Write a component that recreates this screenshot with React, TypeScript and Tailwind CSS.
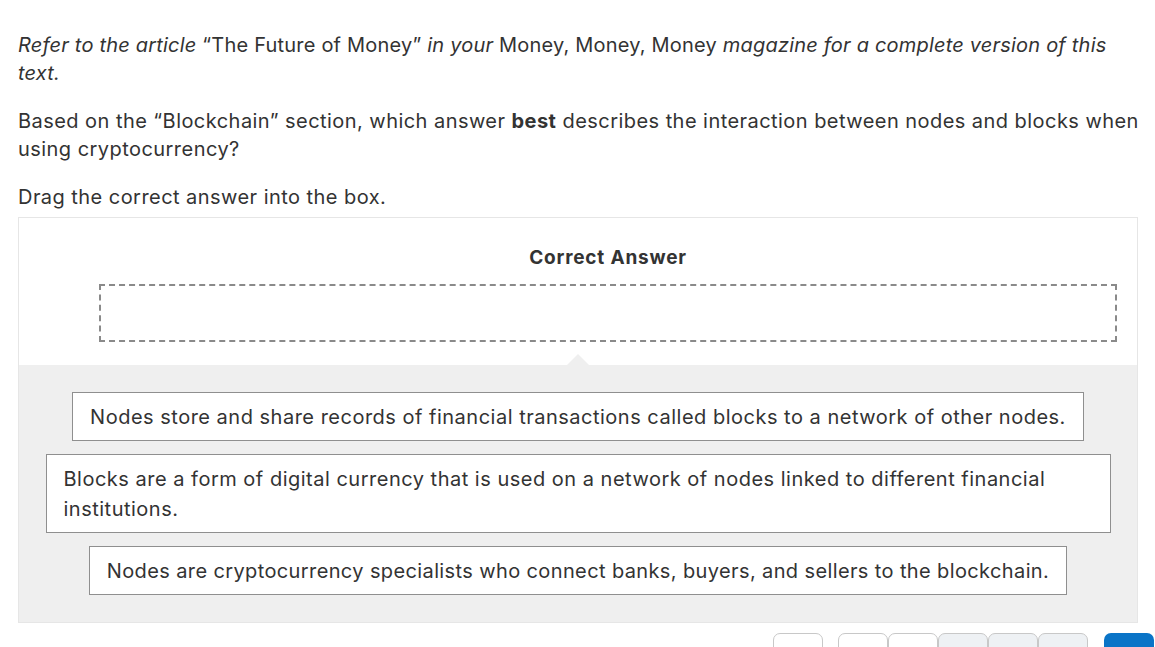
import React from "react";

const font = { fontFamily: "Inter, 'Noto Sans', sans-serif" };

function Card({ children, tight }: { children: React.ReactNode; tight?: boolean }) {
  return (
    <div
      className={
        "w-fit max-w-[1065px] mx-auto bg-white border border-[#8f8f8f] px-[17px] py-[8.5px] text-[20px] leading-[30px] text-[#333] " +
        (tight ? "tracking-[0.38px]" : "tracking-[0.5px]")
      }
    >
      {children}
    </div>
  );
}

function Tab({ className }: { className: string }) {
  return <div className={"shrink-0 w-[50px] h-[30px] rounded-t-[7px] " + className}></div>;
}

export default function App() {
  return (
    <div className="bg-white pl-[18px] pr-[8px] pt-[31px] text-[#333] text-[20px] leading-[28px] tracking-[0.45px] overflow-hidden h-[647px]" style={font}>
      <p className="tracking-[0.2px] w-[1110px]">
        <i>Refer to the article</i> “The Future of Money” <i>in your</i> Money, Money, Money{" "}
        <i>magazine for a complete version of this text.</i>
      </p>
      <p className="mt-[20px]">
        Based on the “Blockchain” section, which answer <b>best</b> describes the interaction between nodes and blocks when using cryptocurrency?
      </p>
      <p className="mt-[20px]">Drag the correct answer into the box.</p>
      <div className="mt-[6px] w-[1120px] border border-[#e6e6e6]">
        <div className="bg-white pt-[26px] pb-[23px] pl-[80px] pr-[20px]">
          <div className="text-center font-bold text-[19px] leading-[28px] tracking-[0.8px] text-[#333]">Correct Answer</div>
          <div className="mt-[12px] h-[58px] border-2 border-dashed border-[#8a8a8a]"></div>
        </div>
        <div className="relative bg-[#efefef] pt-[27px] pb-[27px] flex flex-col gap-[13px]">
          <div className="absolute left-[548px] top-[-11px] w-0 h-0 border-l-[11px] border-r-[11px] border-b-[11px] border-l-transparent border-r-transparent border-b-[#efefef]"></div>
          <Card>Nodes store and share records of financial transactions called blocks to a network of other nodes.</Card>
          <Card>Blocks are a form of digital currency that is used on a network of nodes linked to different financial institutions.</Card>
          <Card tight>Nodes are cryptocurrency specialists who connect banks, buyers, and sellers to the blockchain.</Card>
        </div>
      </div>
      <div className="flex mt-[10px] ml-[755px] w-[400px]">
        <Tab className="border border-[#c8c8c8] bg-white" />
        <Tab className="ml-[15px] border border-[#c8c8c8] bg-white" />
        <Tab className="border border-[#c8c8c8] bg-white" />
        <Tab className="border border-[#c8c8c8] bg-[#eef1f4]" />
        <Tab className="border border-[#c8c8c8] bg-[#eef1f4]" />
        <Tab className="border border-[#c8c8c8] bg-[#eef1f4]" />
        <Tab className="ml-[16px] bg-[#0a74c7]" />
      </div>
    </div>
  );
}
